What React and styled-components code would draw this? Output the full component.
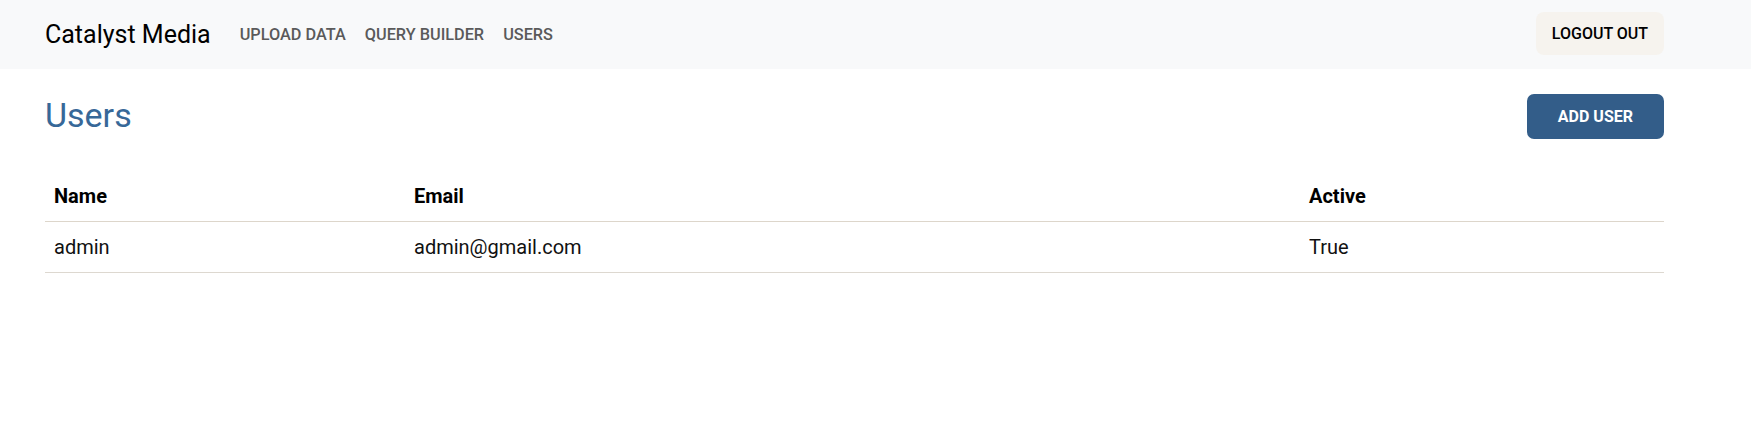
import React from "react";
import styled, { createGlobalStyle } from "styled-components";

const Global = createGlobalStyle`
  html, body { margin: 0; padding: 0; background: #fff; }
  body { font-family: Roboto, "Noto Sans", "Liberation Sans", sans-serif; color: #212529; }
  * { box-sizing: border-box; }
`;

const Navbar = styled.nav`
  height: 69px;
  background: #f8f9fa;
  display: flex;
  align-items: center;
  padding: 0 87px 0 45px;
`;

const Brand = styled.a`
  font-size: 25px;
  color: #000;
  text-decoration: none;
  margin-right: 29px;
  line-height: 1;
`;

const NavList = styled.div`
  display: flex;
  gap: 19px;
  flex: 1;
`;

const NavLink = styled.a`
  font-size: 16.3px;
  font-weight: 500;
  color: #5a5a5a;
  text-transform: uppercase;
  text-decoration: none;
`;

const LogoutButton = styled.button`
  height: 43px;
  padding: 0 16px;
  border: none;
  border-radius: 8px;
  background: #f6f3ee;
  color: #000;
  font-family: inherit;
  font-size: 16px;
  font-weight: 500;
  margin-top: -2px;
`;

const Main = styled.main`
  padding: 24px 87px 0 45px;
`;

const HeaderRow = styled.div`
  display: flex;
  justify-content: space-between;
  align-items: flex-start;
  margin-bottom: 32px;
`;

const Title = styled.h2`
  margin: 2px 0 0;
  font-size: 34px;
  font-weight: 400;
  line-height: 41px;
  color: #376898;
`;

const PrimaryButton = styled.button`
  margin-top: 1px;
  height: 45px;
  padding: 0 31px;
  border: none;
  border-radius: 7px;
  background: #335d89;
  color: #fff;
  font-family: inherit;
  font-size: 16px;
  font-weight: 700;
`;

const Table = styled.table`
  width: 100%;
  border-collapse: collapse;
  table-layout: fixed;
  font-size: 20px;
`;

const Col = styled.col`
  width: ${(p) => p.$w}px;
`;

const Th = styled.th`
  text-align: left;
  font-weight: 700;
  color: #000;
  padding: 10px 8px 10px 9px;
  line-height: 30px;
  border-bottom: 1px solid #ddd6cb;
`;

const Td = styled.td`
  padding: 10px 8px 10px 9px;
  line-height: 30px;
  color: #111;
  border-bottom: 1px solid #ddd8d0;
`;

const users = [{ name: "admin", email: "admin@gmail.com", active: "True" }];

export default function App() {
  return (
    <>
      <Global />
      <Navbar>
        <Brand href="#">Catalyst Media</Brand>
        <NavList>
          <NavLink href="#">Upload Data</NavLink>
          <NavLink href="#">Query Builder</NavLink>
          <NavLink href="#">Users</NavLink>
        </NavList>
        <LogoutButton>LOGOUT OUT</LogoutButton>
      </Navbar>
      <Main>
        <HeaderRow>
          <Title>Users</Title>
          <PrimaryButton>ADD USER</PrimaryButton>
        </HeaderRow>
        <Table>
          <colgroup>
            <Col $w={360} />
            <Col $w={895} />
            <Col $w={364} />
          </colgroup>
          <thead>
            <tr>
              <Th>Name</Th>
              <Th>Email</Th>
              <Th>Active</Th>
            </tr>
          </thead>
          <tbody>
            {users.map((u) => (
              <tr key={u.email}>
                <Td>{u.name}</Td>
                <Td>{u.email}</Td>
                <Td>{u.active}</Td>
              </tr>
            ))}
          </tbody>
        </Table>
      </Main>
    </>
  );
}
